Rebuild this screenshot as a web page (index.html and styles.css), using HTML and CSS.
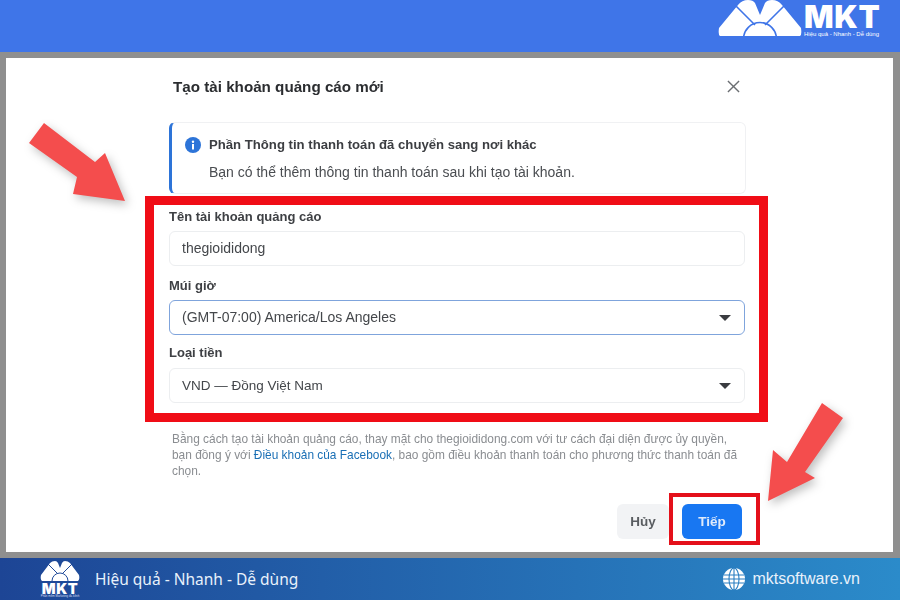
FILE: index.html
```html
<!DOCTYPE html>
<html lang="vi">
<head>
    <meta charset="UTF-8">
    <title>Tạo tài khoản quảng cáo mới</title>
    <link rel="stylesheet" href="styles.css">
</head>
<body>
<header class="top-bar">
    <svg class="top-logo-mark" viewBox="0 0 84 36">
        <path d="M1 28 L20 5 Q24 0 30 0 Q35 0 37 3 L42 15 L47 3 Q49 0 54 0 Q60 0 64 5 L83 28 Q84 35 82 36 L2 36 Q0 35 1 28 Z" fill="#fff"/>
        <path d="M17 5 L37 25 M67 5 L47 25" stroke="#3f75e8" stroke-width="1.6" fill="none"/>
        <circle cx="42" cy="39" r="16.5" stroke="#3f75e8" stroke-width="1.6" fill="none"/>
    </svg>
    <div class="top-logo-text">
        <div class="top-logo-name">MKT</div>
        <div class="top-logo-slogan">Hiệu quả - Nhanh - Dễ dùng</div>
    </div>
</header>

<main class="screen">
    <div class="panel">
        <div class="dialog">
            <div class="dialog-head">
                <h1 class="dialog-title">Tạo tài khoản quảng cáo mới</h1>
                <svg class="close-icon" viewBox="0 0 14 14">
                    <path d="M1 1 L13 13 M13 1 L1 13" stroke="#6b6e72" stroke-width="1.5" fill="none"/>
                </svg>
            </div>

            <div class="notice">
                <svg class="notice-icon" viewBox="0 0 16 16">
                    <circle cx="8" cy="8" r="8" fill="#2d74d8"/>
                    <rect x="7" y="7" width="2" height="5.5" fill="#fff"/>
                    <circle cx="8" cy="4.8" r="1.2" fill="#fff"/>
                </svg>
                <div>
                    <div class="notice-title">Phần Thông tin thanh toán đã chuyển sang nơi khác</div>
                    <div class="notice-text">Bạn có thể thêm thông tin thanh toán sau khi tạo tài khoản.</div>
                </div>
            </div>

            <div class="highlight-box">
                <div class="field-label field-label-tight">Tên tài khoản quảng cáo</div>
                <div class="field field-name">thegioididong</div>
                <div class="field-label field-label-tight">Múi giờ</div>
                <div class="field field-select field-active">(GMT-07:00) America/Los Angeles<span class="caret"></span></div>
                <div class="field-label">Loại tiền</div>
                <div class="field field-select field-currency">VND — Đồng Việt Nam<span class="caret"></span></div>
            </div>

            <p class="terms">Bằng cách tạo tài khoản quảng cáo, thay mặt cho thegioididong.com với tư cách đại diện được ủy quyền,<br>
                bạn đồng ý với <a class="terms-link">Điều khoản của Facebook</a>, bao gồm điều khoản thanh toán cho phương thức thanh toán đã<br>
                chọn.</p>

            <div class="actions">
                <button class="button button-cancel">Hủy</button>
                <div class="next-highlight">
                    <button class="button button-next">Tiếp</button>
                </div>
            </div>
        </div>
    </div>

    <svg class="arrow" viewBox="0 0 900 600">
        <polygon points="44,123 95,162 105,153 125,201 73,194 77,177 29,143"/>
        <polygon points="822,403 787,462 773,450 768,501 815,478 805,472 843,418"/>
    </svg>
</main>

<footer class="bottom-bar">
    <div class="bottom-left">
        <div class="bottom-logo">
            <svg class="bottom-logo-mark" viewBox="0 0 40 20">
                <path d="M1 14 L10 2 Q12 0 15 0 Q17 0 18 2 L20 7 L22 2 Q23 0 25 0 Q28 0 30 2 L39 14 Q40 18 38 20 L2 20 Q0 18 1 14 Z" fill="#fff"/>
                <path d="M8 3 L17 12 M32 3 L23 12" stroke="#1f4a9a" stroke-width="1" fill="none"/>
                <circle cx="20" cy="20" r="8" stroke="#1f4a9a" stroke-width="1" fill="none"/>
            </svg>
            <div class="bottom-logo-name">MKT</div>
            <div class="bottom-logo-note">Phần mềm Marketing đa kênh</div>
        </div>
        <span class="bottom-slogan">Hiệu quả - Nhanh - Dễ dùng</span>
    </div>
    <div class="bottom-right">
        <svg class="globe" viewBox="0 0 22 22">
            <circle cx="11" cy="11" r="11" fill="#fff"/>
            <g stroke="#2a7fc2" stroke-width="1.1" fill="none">
                <ellipse cx="11" cy="11" rx="5" ry="11"/>
                <path d="M11 0 V22 M1 7 H21 M0 11 H22 M1 15 H21"/>
            </g>
        </svg>
        <span class="site-name">mktsoftware.vn</span>
    </div>
</footer>
</body>
</html>
```

FILE: styles.css
```css
* {
    box-sizing: border-box;
}

html, body {
    margin: 0;
    height: 100%;
}

body {
    width: 900px;
    height: 600px;
    overflow: hidden;
    display: flex;
    flex-direction: column;
    font-family: "Liberation Sans", Arial, sans-serif;
    color: #1c1e21;
}

/* top bar */
.top-bar {
    height: 52px;
    flex-shrink: 0;
    background-color: #3f75e8;
    display: flex;
    justify-content: flex-end;
    padding-right: 19px;
}

.top-logo-mark {
    width: 84px;
    height: 36px;
    margin-right: 2px;
}

.top-logo-text {
    color: #fff;
    width: 77px;
    padding-top: 4px;
}

.top-logo-name {
    font-family: Inter, sans-serif;
    font-weight: 900;
    font-size: 31px;
    line-height: 26px;
    letter-spacing: 0.6px;
}

.top-logo-slogan {
    font-size: 6px;
    line-height: 8px;
}

/* screenshot area */
.screen {
    position: relative;
    flex: 1;
    background-color: #8f8f8f;
    padding: 6px 7px 6px 6px;
}

.panel {
    height: 100%;
    background-color: #fff;
    padding-left: 163px;
    filter: blur(0.35px);
}

.dialog {
    width: 577px;
}

.dialog-head {
    display: flex;
    justify-content: space-between;
    align-items: center;
    height: 57px;
    padding: 0 6px 0 4px;
}

.dialog-title {
    margin: 0;
    font-size: 15.2px;
    font-weight: bold;
    color: #2b2d30;
}

.close-icon {
    width: 13px;
    height: 13px;
}

.notice {
    height: 72px;
    margin-top: 7px;
    display: flex;
    gap: 8px;
    padding: 14px 0 0 13px;
    border: 1px solid #f0f1f3;
    border-left: 3px solid #2d74d8;
    border-radius: 6px;
}

.notice-icon {
    width: 16px;
    height: 16px;
    flex-shrink: 0;
}

.notice-title {
    font-size: 13.15px;
    font-weight: bold;
    line-height: 16px;
    color: #3c3e42;
}

.notice-text {
    margin-top: 11px;
    font-size: 14px;
    line-height: 16px;
    color: #4a4d51;
}

.highlight-box {
    height: 226px;
    margin: 2px -22px 0 -24px;
    padding: 4px 14px 0 15px;
    border: 9px solid #f00d16;
}

.field-label {
    font-size: 13px;
    font-weight: bold;
    line-height: 16px;
    color: #3e4044;
    margin-bottom: 7px;
}

.field-label-tight {
    margin-bottom: 6px;
}

.field {
    position: relative;
    height: 35px;
    margin-bottom: 10px;
    padding-left: 12px;
    border: 1px solid #eceef0;
    border-radius: 6px;
    font-size: 14px;
    line-height: 33px;
    color: #44474b;
}

.field-name {
    margin-bottom: 12px;
}

.field-active {
    border-color: #7fa4dc;
}

.field-currency {
    font-size: 13.5px;
}

.caret {
    position: absolute;
    right: 13px;
    top: 14px;
    border-left: 6px solid transparent;
    border-right: 6px solid transparent;
    border-top: 6px solid #3a3c40;
}

.terms {
    margin: 9px 0 0 3px;
    font-size: 11.9px;
    line-height: 16px;
    color: #8a8d91;
}

.terms-link {
    color: #1a6fb5;
}

.actions {
    display: flex;
    justify-content: flex-end;
    align-items: flex-start;
    margin: 14px -14px 0 0;
}

.button {
    height: 35px;
    border: none;
    border-radius: 6px;
    font-family: inherit;
    font-size: 13.5px;
    font-weight: bold;
}

.button-cancel {
    width: 52px;
    margin-top: 11px;
    background-color: #f2f3f5;
    color: #5a5d61;
}

.next-highlight {
    width: 91px;
    height: 52px;
    padding: 7px 0 0 9px;
    border: 4px solid #e4101a;
}

.button-next {
    width: 60px;
    background-color: #1877f2;
    color: #dfeafb;
}

/* big red arrows over the screenshot */
.arrow {
    position: absolute;
    left: 0;
    top: -52px;
    width: 900px;
    height: 600px;
    pointer-events: none;
    fill: #f44d4d;
    filter: drop-shadow(3px 4px 5px rgba(0, 0, 0, 0.25));
}

/* bottom bar */
.bottom-bar {
    height: 42px;
    flex-shrink: 0;
    display: flex;
    justify-content: space-between;
    align-items: center;
    padding: 0 40px 0 40px;
    background: linear-gradient(90deg, #1d4595 0%, #2b8bca 100%);
    color: #e8f1fb;
}

.bottom-left, .bottom-right {
    display: flex;
    align-items: center;
}

.bottom-logo {
    width: 40px;
    margin-right: 15px;
    display: flex;
    flex-direction: column;
    align-items: center;
}

.bottom-logo-mark {
    width: 40px;
    height: 20px;
}

.bottom-logo-name {
    margin-top: 2px;
    font-family: Inter, sans-serif;
    font-weight: 900;
    font-size: 14.5px;
    line-height: 11px;
    letter-spacing: 0.5px;
    color: #fff;
}

.bottom-logo-note {
    margin-top: 1px;
    font-size: 2.9px;
    line-height: 3px;
    white-space: nowrap;
    color: #d5def0;
}

.bottom-slogan {
    font-family: "Noto Sans", sans-serif;
    font-size: 15.5px;
}

.globe {
    width: 22px;
    height: 22px;
    margin-right: 7px;
}

.site-name {
    font-size: 16px;
}
```
